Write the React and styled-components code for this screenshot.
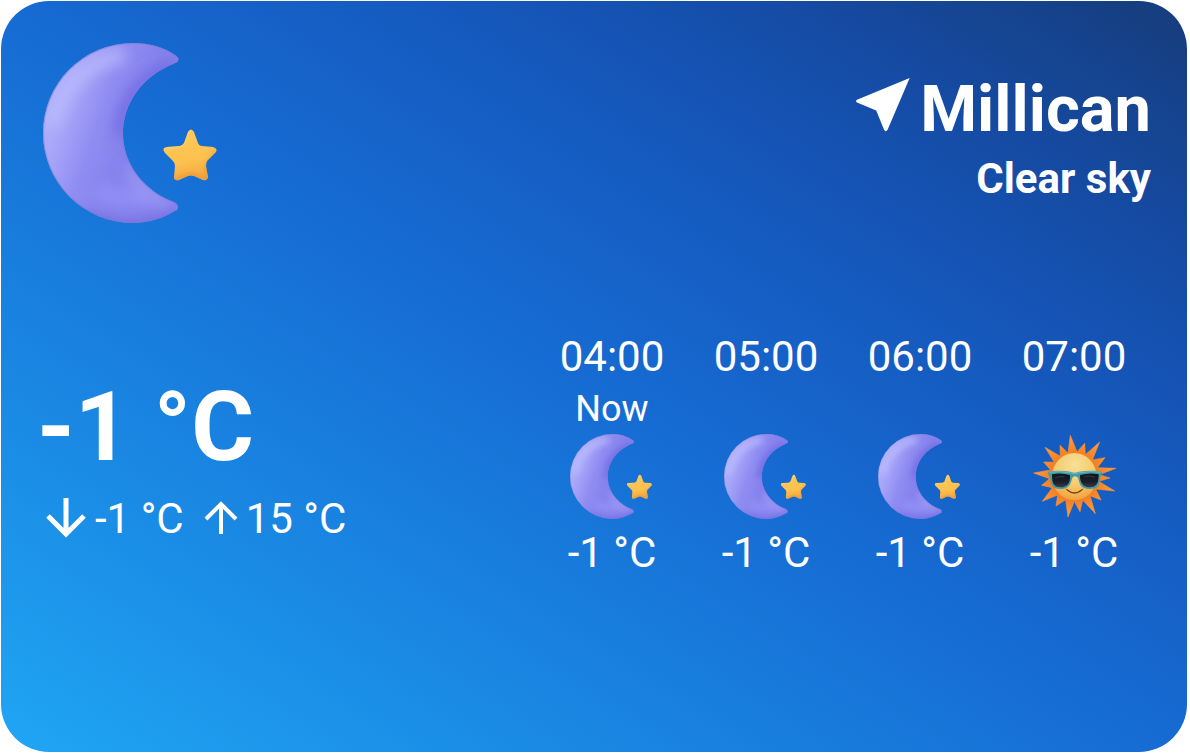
import React, { useId } from "react";
import styled, { createGlobalStyle } from "styled-components";

const GlobalStyle = createGlobalStyle`
  * { box-sizing: border-box; }
  body { margin: 0; background: #fff; }
`;

const Card = styled.main`
  display: flex;
  flex-direction: column;
  gap: 104px;
  min-height: calc(100vh - 3px);
  margin: 1px 3px 2px 1px;
  padding: 42px 36px;
  border-radius: 48px;
  color: #fff;
  font-family: Roboto, "Liberation Sans", sans-serif;
  background: linear-gradient(to top right, #20a6f4 0%, #1c95ea 14%, #1982e0 30%, #166bd2 50%, #1559be 68%, #154ca6 82%, #163f82 97%, #163d7c 100%);
`;

const Header = styled.header`
  display: flex;
  justify-content: space-between;
  align-items: flex-start;
  padding-left: 6px;
`;

const Place = styled.div`
  display: flex;
  flex-direction: column;
  align-items: flex-end;
  padding-top: 26px;
`;

const City = styled.h1`
  display: flex;
  align-items: center;
  gap: 10px;
  margin: 0;
  font-size: 65px;
  line-height: 80px;
  font-weight: 700;
`;

const Condition = styled.p`
  margin: 0;
  font-size: 42px;
  line-height: 60px;
  font-weight: 700;
`;

const Body = styled.div`
  display: flex;
  justify-content: space-between;
  align-items: center;
`;

const Current = styled.section`
  padding-top: 6px;
`;

const Temperature = styled.p`
  margin: 0;
  font-size: 96px;
  line-height: 120px;
  font-weight: 700;
`;

const Range = styled.div`
  display: flex;
  gap: 20px;
  margin-top: 2px;
  padding-left: 8px;
`;

const RangeItem = styled.span`
  display: flex;
  align-items: center;
  gap: 8px;
  font-size: 42px;
  line-height: 60px;
`;

const Hours = styled.ol`
  display: grid;
  grid-template-columns: repeat(4, 154px);
  margin: 0;
  padding: 0;
  list-style: none;
`;

const Hour = styled.li`
  display: flex;
  flex-direction: column;
  align-items: center;
  font-size: 42px;
  line-height: 60px;
`;

const HourNote = styled.span`
  min-height: 44px;
  font-size: 36px;
  line-height: 44px;
`;

const Icon = styled.svg`
  display: block;
  flex: none;
  width: ${(p) => p.$size}px;
  height: ${(p) => p.$size}px;
  margin: ${(p) => p.$margin || "0"};
  overflow: visible;
`;

const MOON =
  "M132 12 Q137 15 135 18 Q134 20 130 21 C100 33 80 60 80 90 C80 121 101 148 131 159 Q137 162 134 167 C120 175 106 180 90 180 A90 90 0 0 1 90 0 C106 0 121 4 132 12 Z";
const STAR =
  "M145 89 Q148 84 151 89 L155 100 Q156 103 159 103 L170 104 Q176 106 172 110 L164 118 Q163 120 163 123 L165 134 Q164 138 160 137 L151 133 Q148 132 145 133 L136 137 Q131 138 131 134 L132 123 Q132 120 130 118 L122 110 Q118 105 124 104 L137 103 Q140 102 141 100 Z";

function MoonIcon({ size, margin }) {
  const id = useId().replace(/[^a-zA-Z0-9]/g, "");
  return (
    <Icon $size={size} $margin={margin} viewBox="0 0 180 180" role="img" aria-label="Clear night">
      <defs>
        <linearGradient id={`${id}m`} gradientUnits="userSpaceOnUse" x1="0" y1="60" x2="92" y2="92">
          <stop offset="0" stopColor="#b3b4fc" />
          <stop offset="0.3" stopColor="#a5a3f8" />
          <stop offset="0.6" stopColor="#908df2" />
          <stop offset="1" stopColor="#8480ec" />
        </linearGradient>
        <linearGradient id={`${id}s`} x1="0" y1="0" x2="0.2" y2="1">
          <stop offset="0" stopColor="#ffcb58" />
          <stop offset="0.7" stopColor="#fdc04d" />
          <stop offset="1" stopColor="#f5ac42" />
        </linearGradient>
        <clipPath id={`${id}c`}><path d={MOON} /></clipPath>
        <clipPath id={`${id}d`}><path d={STAR} /></clipPath>
        <filter id={`${id}b`} filterUnits="userSpaceOnUse" x="-60" y="-60" width="300" height="300">
          <feGaussianBlur stdDeviation="7" />
        </filter>
        <filter id={`${id}t`} filterUnits="userSpaceOnUse" x="100" y="60" width="100" height="100">
          <feGaussianBlur stdDeviation="2" />
        </filter>
      </defs>
      <path d={MOON} fill={`url(#${id}m)`} />
      <g clipPath={`url(#${id}c)`} fill="none">
        <path d="M10 84 C16 44 46 18 82 12" stroke="#bfc0ff" strokeWidth="14" opacity="0.7" filter={`url(#${id}b)`} />
        <path d="M132 24 C98 34 80 58 77 94" stroke="#746de4" strokeWidth="14" filter={`url(#${id}b)`} />
        <path d="M54 148 C72 156 90 156 108 154" stroke="#918ff5" strokeWidth="20" filter={`url(#${id}b)`} />
        <path d="M84 124 C94 144 110 156 128 162" stroke="#a29ff7" strokeWidth="8" filter={`url(#${id}b)`} />
        <path d="M40 174 C70 192 104 190 138 174" stroke="#6d66da" strokeWidth="12" filter={`url(#${id}b)`} />
        <path d={MOON} stroke="#7b7fce" strokeWidth="2" opacity="0.6" />
      </g>
      <path d={STAR} fill={`url(#${id}s)`} />
      <g clipPath={`url(#${id}d)`} fill="none">
        <path d="M146 85 L138 101 L120 105" stroke="#ffdc80" strokeWidth="3" filter={`url(#${id}t)`} />
        <path d="M132 137 L148 131 L164 137 L164 122 L174 108" stroke="#e8963a" strokeWidth="3" filter={`url(#${id}t)`} />
      </g>
    </Icon>
  );
}

const RAY_TIPS = [
  [164, 46], [207, 70], [252, 66], [268, 113], [301, 145], [283, 174],
  [297, 213], [256, 240], [239, 281], [193, 275], [157, 291], [121, 258],
  [80, 244], [78, 196], [54, 159], [84, 126], [88, 82], [133, 76],
];

const RAYS = RAY_TIPS.map(([x, y], i) => {
  const [nx, ny] = RAY_TIPS[(i + 1) % RAY_TIPS.length];
  const a = Math.atan2(y - 170, x - 176);
  const b = Math.atan2(ny - 170, nx - 176);
  const mid = Math.atan2(Math.sin(a) + Math.sin(b), Math.cos(a) + Math.cos(b));
  return `${x},${y} ${Math.round(176 + 74 * Math.cos(mid))},${Math.round(170 + 74 * Math.sin(mid))}`;
}).join(" ");

function SunIcon({ size, margin }) {
  const id = useId().replace(/[^a-zA-Z0-9]/g, "");
  return (
    <Icon $size={size} $margin={margin} viewBox="49 42 255 255" role="img" aria-label="Sunny">
      <defs>
        <radialGradient id={`${id}r`} gradientUnits="userSpaceOnUse" cx="176" cy="170" r="122">
          <stop offset="0.5" stopColor="#ee7a22" />
          <stop offset="0.75" stopColor="#f98b2c" />
          <stop offset="1" stopColor="#fd9f48" />
        </radialGradient>
        <radialGradient id={`${id}f`} cx="0.5" cy="0.25" r="0.8">
          <stop offset="0" stopColor="#f8df98" />
          <stop offset="0.5" stopColor="#f6cd70" />
          <stop offset="0.85" stopColor="#f5ab48" />
          <stop offset="1" stopColor="#f0923a" />
        </radialGradient>
        <linearGradient id={`${id}g`} x1="0" y1="0" x2="0" y2="1">
          <stop offset="0" stopColor="#10131c" />
          <stop offset="0.6" stopColor="#1b1e29" />
          <stop offset="1" stopColor="#393c49" />
        </linearGradient>
      </defs>
      <polygon points={RAYS} fill={`url(#${id}r)`} stroke="#f98f34" strokeWidth="2" strokeLinejoin="round" />
      <ellipse cx="176" cy="170" rx="67" ry="71" fill={`url(#${id}f)`} />
      <path d="M155 210 Q177 228 198 210" fill="none" stroke="#70421a" strokeWidth="4" strokeLinecap="round" />
      <path d="M151 207 L157 213 M202 207 L196 213" stroke="#8a5420" strokeWidth="3" strokeLinecap="round" />
      <path
        d="M97 155 Q130 149 164 155 Q177 161 190 155 Q226 149 260 155 L257 166 Q254 169 253 177 C251 199 243 207 223 207 C204 207 193 201 189 180 Q187 169 178 169 Q170 169 168 180 C164 200 152 207 134 207 C114 207 107 199 104 178 Q103 170 99 167 Z"
        fill="#429ba6"
      />
      <path d="M101 157 Q130 152 162 158 Q177 165 192 158 Q226 152 256 157" fill="none" stroke="#62bcc2" strokeWidth="3" />
      <path d="M109 163 Q136 157 163 165 C165 191 153 202 135 202 C116 202 109 194 109 163 Z" fill={`url(#${id}g)`} />
      <path d="M193 165 Q221 157 249 163 C249 194 240 202 222 202 C204 202 192 190 193 165 Z" fill={`url(#${id}g)`} />
      <path d="M118 174 Q130 168 146 170 M206 170 Q222 166 238 172" fill="none" stroke="#555b69" strokeWidth="4" opacity="0.4" />
    </Icon>
  );
}

const HOURS = [
  { time: "04:00", note: "Now", icon: MoonIcon, temp: "-1 °C" },
  { time: "05:00", icon: MoonIcon, temp: "-1 °C" },
  { time: "06:00", icon: MoonIcon, temp: "-1 °C" },
  { time: "07:00", icon: SunIcon, temp: "-1 °C" },
];

export default function App() {
  return (
    <>
      <GlobalStyle />
      <Card>
        <Header>
          <MoonIcon size={180} />
          <Place>
            <City>
              <Icon $size={54} $margin="0 0 8px" viewBox="48 52 163 163" aria-hidden="true">
                <path d="M210 52 L51 118 Q45 122 51 126 L109 150 L133 209 Q138 216 143 209 Z" fill="#fff" />
              </Icon>
              Millican
            </City>
            <Condition>Clear sky</Condition>
          </Place>
        </Header>
        <Body>
          <Current>
            <Temperature>-1 °C</Temperature>
            <Range>
              <RangeItem>
                <Icon $size={42} viewBox="0 0 42 42" aria-hidden="true">
                  <path d="M21 0 V36 M3 18 L21 36 L39 18" fill="none" stroke="#fff" strokeWidth="5" />
                </Icon>
                -1 °C
              </RangeItem>
              <RangeItem>
                <Icon $size={34} viewBox="0 0 34 34" aria-hidden="true">
                  <path d="M17 32 V3 M2 17 L17 2 L32 17" fill="none" stroke="#fff" strokeWidth="4" />
                </Icon>
                15 °C
              </RangeItem>
            </Range>
          </Current>
          <Hours>
            {HOURS.map(({ time, note, icon: WeatherIcon, temp }) => (
              <Hour key={time}>
                <time>{time}</time>
                <HourNote>{note}</HourNote>
                <WeatherIcon size={85} margin="3px 0 4px" />
                <span>{temp}</span>
              </Hour>
            ))}
          </Hours>
        </Body>
      </Card>
    </>
  );
}
